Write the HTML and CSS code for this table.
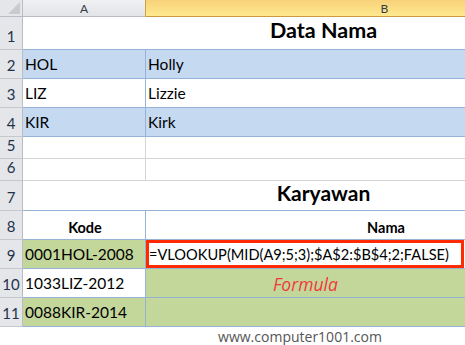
FILE: index.html
```html
<!DOCTYPE html>
<html>
<head>
<meta charset="utf-8">
<link rel="stylesheet" href="styles.css">
</head>
<body>
<div class="sheet">
  <div class="grid">
    <div class="corner"><span class="tri"></span></div>
    <div class="colhead">A</div>
    <div class="colhead sel">B</div>

    <div class="rowhead">1</div>
    <div class="cell merged title">Data Nama</div>

    <div class="rowhead">2</div>
    <div class="cell blue bb bv">HOL</div>
    <div class="cell blue bb">Holly</div>

    <div class="rowhead">3</div>
    <div class="cell bb bv">LIZ</div>
    <div class="cell bb">Lizzie</div>

    <div class="rowhead">4</div>
    <div class="cell blue bb bv">KIR</div>
    <div class="cell blue bb">Kirk</div>

    <div class="rowhead">5</div>
    <div class="cell gb gv"></div>
    <div class="cell gb"></div>

    <div class="rowhead">6</div>
    <div class="cell gb gv"></div>
    <div class="cell gb"></div>

    <div class="rowhead">7</div>
    <div class="cell merged title2 bb">Karyawan</div>

    <div class="rowhead">8</div>
    <div class="cell bb bv hdr">Kode</div>
    <div class="cell bb hdr">Nama</div>

    <div class="rowhead">9</div>
    <div class="cell green bb bv">0001HOL-2008</div>
    <div class="cell bb formula-cell"><div class="formula">=VLOOKUP(MID(A9;5;3);$A$2:$B$4;2;FALSE)</div></div>

    <div class="rowhead">10</div>
    <div class="cell bb bv">1033LIZ-2012</div>
    <div class="cell green bb"><span class="note">Formula</span></div>

    <div class="rowhead">11</div>
    <div class="cell green bb bv">0088KIR-2014</div>
    <div class="cell green bb"></div>
  </div>
  <div class="footer">www.computer1001.com</div>
</div>
</body>
</html>
```

FILE: styles.css
```css
html, body {
  margin: 0;
  padding: 0;
  background: #ffffff;
  overflow: hidden;
}
.sheet {
  width: 465px;
  height: 345px;
  overflow: hidden;
  font-family: "Lato", "Liberation Sans", sans-serif;
}
.grid {
  display: grid;
  grid-template-columns: 23px 123px 478px;
  grid-template-rows: 17px 33px 29px 29px 29px 22px 22px 30px 29px 29px 29px 29px;
  width: 624px;
}
.grid > div {
  box-sizing: border-box;
}
.corner {
  position: relative;
  background: #e4e6ea;
  border-right: 1px solid #b9bcc2;
  border-bottom: 1px solid #b9bcc2;
}
.tri {
  position: absolute;
  right: 2px;
  bottom: 2px;
  width: 0;
  height: 0;
  border-left: 12px solid transparent;
  border-bottom: 12px solid #c8cacd;
}
.colhead {
  background: linear-gradient(#eef0f2, #e2e4e8);
  border-right: 1px solid #c0c3c8;
  border-bottom: 1px solid #b9bcc2;
  color: #333c4a;
  font-size: 12px;
  display: flex;
  justify-content: center;
  align-items: center;
  padding-top: 1px;
}
.colhead.sel {
  background: linear-gradient(#f8d27a, #fee98e);
  border-bottom: 1px solid #c99a3e;
}
.grid > .colhead:nth-child(2) {
  border-right: 1px solid #d0a04a;
}
.rowhead {
  background: #e4e6ea;
  border-right: 1px solid #b9bcc2;
  border-bottom: 1px solid #c6c8cc;
  color: #23324a;
  font-size: 15px;
  display: flex;
  justify-content: center;
  align-items: flex-end;
  padding-bottom: 4px;
}
.cell {
  display: flex;
  align-items: center;
  padding-left: 2px;
  font-size: 15.5px;
  color: #000;
  white-space: nowrap;
}
.merged {
  grid-column: 2 / span 2;
  justify-content: center;
  font-weight: 700;
  padding-left: 0;
}
.title {
  font-size: 21.5px;
  border-bottom: 1px solid #95b3d7;
  align-items: flex-end;
  padding-bottom: 6px;
}
.title2 {
  font-size: 21px;
  align-items: flex-end;
  padding-bottom: 5px;
}
.blue { background: #c5d9f1; }
.green { background: #c4d79b; }
.bb { border-bottom: 1px solid #95b3d7; }
.bv { border-right: 1px solid #95b3d7; }
.gb { border-bottom: 1px solid #d4d4d4; }
.gv { border-right: 1px solid #d4d4d4; }
.hdr {
  justify-content: center;
  font-weight: 700;
  font-size: 14.5px;
  align-items: flex-end;
  padding-bottom: 3px;
}
.formula-cell {
  padding: 0;
  align-items: stretch;
}
.formula {
  box-sizing: border-box;
  width: 318px;
  border: 3px solid #ff2a00;
  display: flex;
  align-items: center;
  padding-left: 0;
  font-size: 14.6px;
  background: #fff;
}
.note {
  margin-left: 125px;
  margin-top: 2px;
  font-style: italic;
  color: #f03a3a;
  font-size: 17.5px;
  font-family: "Open Sans", sans-serif;
}
.footer {
  width: 465px;
  padding-left: 135px;
  box-sizing: border-box;
  text-align: center;
  font-family: "Open Sans", "Noto Sans", sans-serif;
  font-size: 14px;
  color: #555555;
  line-height: 18px;
  margin-top: 1px;
}
```
